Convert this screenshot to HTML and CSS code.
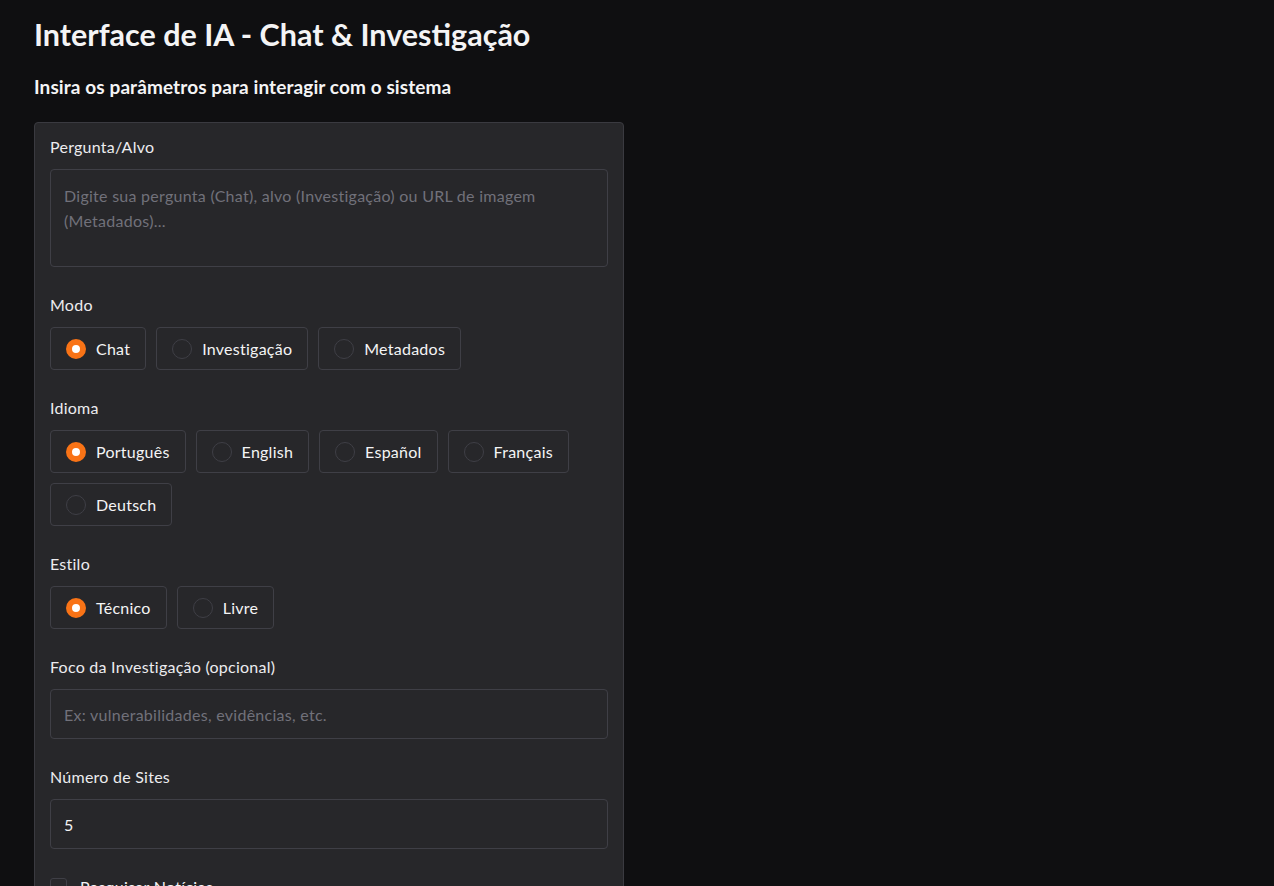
FILE: index.html
```html
<!DOCTYPE html>
<html lang="pt">
<head>
<meta charset="utf-8">
<title>Interface de IA - Chat &amp; Investigação</title>
<link rel="stylesheet" href="styles.css">
</head>
<body>
<main class="app">
  <h1 class="title">Interface de IA - Chat &amp; Investigação</h1>
  <h3 class="subtitle">Insira os parâmetros para interagir com o sistema</h3>
  <section class="panel">
    <div class="field">
      <label class="label">Pergunta/Alvo</label>
      <div class="textarea placeholder">Digite sua pergunta (Chat), alvo (Investigação) ou URL de imagem (Metadados)...</div>
    </div>
    <div class="field">
      <span class="label">Modo</span>
      <div class="radios">
        <span class="radio checked"><span class="dot"></span>Chat</span>
        <span class="radio"><span class="dot"></span>Investigação</span>
        <span class="radio"><span class="dot"></span>Metadados</span>
      </div>
    </div>
    <div class="field">
      <span class="label">Idioma</span>
      <div class="radios">
        <span class="radio checked"><span class="dot"></span>Português</span>
        <span class="radio"><span class="dot"></span>English</span>
        <span class="radio"><span class="dot"></span>Español</span>
        <span class="radio"><span class="dot"></span>Français</span>
        <span class="radio"><span class="dot"></span>Deutsch</span>
      </div>
    </div>
    <div class="field">
      <span class="label">Estilo</span>
      <div class="radios">
        <span class="radio checked"><span class="dot"></span>Técnico</span>
        <span class="radio"><span class="dot"></span>Livre</span>
      </div>
    </div>
    <div class="field">
      <span class="label">Foco da Investigação (opcional)</span>
      <div class="input placeholder">Ex: vulnerabilidades, evidências, etc.</div>
    </div>
    <div class="field">
      <span class="label">Número de Sites</span>
      <div class="input value">5</div>
    </div>
    <div class="field">
      <span class="check"><span class="box"></span>Pesquisar Notícias</span>
    </div>
    <div class="field">
      <span class="check"><span class="box"></span>Pesquisar Redes Sociais</span>
    </div>
  </section>
</main>
</body>
</html>
```

FILE: styles.css
```css
* { box-sizing: border-box; }
html, body {
  margin: 0;
  background: #0f0f11;
}
body {
  font-family: "Source Sans Pro", Lato, "Noto Sans", sans-serif;
  color: #f4f4f5;
  overflow: hidden;
  height: 886px;
}
.app {
  padding: 14px 34px 0 34px;
}
.title {
  margin: 0;
  font-size: 30.5px;
  line-height: 40px;
  font-weight: 700;
  color: #f4f4f5;
}
.subtitle {
  margin: 21px 0 0 0;
  font-size: 19px;
  line-height: 24px;
  font-weight: 700;
  color: #f4f4f5;
  letter-spacing: 0.1px;
}
.panel {
  margin-top: 23px;
  width: 590px;
  background: #27272a;
  border: 1px solid #3a3a40;
  border-radius: 4px;
  padding: 14px 15px 40px 15px;
  display: flex;
  flex-direction: column;
  gap: 28px;
}
.field {
  display: flex;
  flex-direction: column;
  gap: 12px;
}
.label {
  font-size: 16px;
  line-height: 20px;
  color: #ececef;
  letter-spacing: 0.25px;
}
.textarea, .input {
  background: #27272a;
  border: 1px solid #3f3f46;
  border-radius: 4px;
  font-size: 16px;
  letter-spacing: 0.27px;
}
.textarea {
  height: 98px;
  padding: 13px 13px;
  line-height: 25px;
}
.input {
  height: 50px;
  padding: 0 13px;
  display: flex;
  align-items: center;
}
.placeholder { color: #71717a; }
.value { color: #f4f4f5; }
.radios {
  display: flex;
  flex-wrap: wrap;
  gap: 10px 10px;
}
.radio {
  display: inline-flex;
  align-items: center;
  gap: 10px;
  height: 43px;
  padding: 0 15px;
  border: 1px solid #3f3f46;
  border-radius: 4px;
  font-size: 16px;
  letter-spacing: 0.25px;
  color: #f4f4f5;
}
.dot {
  width: 20px;
  height: 20px;
  border-radius: 50%;
  border: 1px solid #3f3f46;
  background: #27272a;
  flex: none;
}
.radio.checked .dot {
  background: #fff;
  border: 6px solid #f97316;
}
.check {
  display: inline-flex;
  align-items: center;
  gap: 13px;
  font-size: 16px;
  letter-spacing: 0.3px;
  color: #f4f4f5;
}
.box {
  width: 17px;
  height: 17px;
  border: 1px solid #3f3f46;
  border-radius: 3px;
  background: #27272a;
}
```
